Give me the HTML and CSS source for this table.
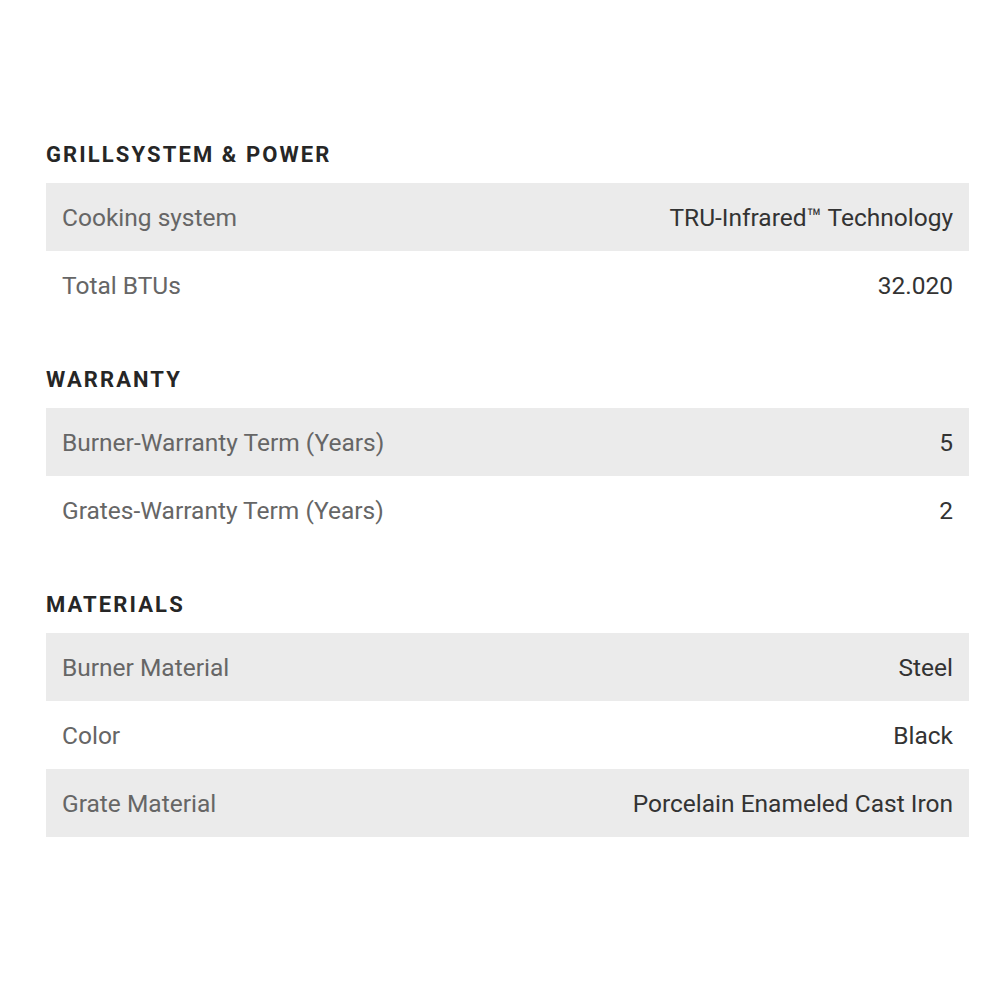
FILE: index.html
```html
<!DOCTYPE html>
<html>
<head>
<meta charset="utf-8">
<link rel="stylesheet" href="styles.css">
</head>
<body>
<main class="specs">
  <section class="group">
    <h2 class="group-title">GRILLSYSTEM &amp; POWER</h2>
    <div class="row shaded"><span class="label">Cooking system</span><span class="value">TRU-Infrared™ Technology</span></div>
    <div class="row"><span class="label">Total BTUs</span><span class="value">32.020</span></div>
  </section>
  <section class="group">
    <h2 class="group-title">WARRANTY</h2>
    <div class="row shaded"><span class="label">Burner-Warranty Term (Years)</span><span class="value">5</span></div>
    <div class="row"><span class="label">Grates-Warranty Term (Years)</span><span class="value">2</span></div>
  </section>
  <section class="group">
    <h2 class="group-title">MATERIALS</h2>
    <div class="row shaded"><span class="label">Burner Material</span><span class="value">Steel</span></div>
    <div class="row"><span class="label">Color</span><span class="value">Black</span></div>
    <div class="row shaded"><span class="label">Grate Material</span><span class="value">Porcelain Enameled Cast Iron</span></div>
  </section>
</main>
</body>
</html>
```
FILE: styles.css
```css
html, body {
  margin: 0;
  padding: 0;
  background: #ffffff;
}
body {
  font-family: Roboto, "Liberation Sans", sans-serif;
}
.specs {
  padding: 141px 31px 0 46px;
  display: flex;
  flex-direction: column;
  gap: 47px;
}
.group {
  display: flex;
  flex-direction: column;
}
.group-title {
  margin: 0 0 14px 0;
  font-size: 22px;
  line-height: 28px;
  font-weight: 700;
  letter-spacing: 2.1px;
  color: #262626;
}
.row {
  height: 68px;
  display: flex;
  align-items: center;
  justify-content: space-between;
  padding: 0 16px;
  font-size: 24.5px;
}
.shaded {
  background: #ebebeb;
}
.label {
  color: #666666;
}
.value {
  color: #333333;
}
```
